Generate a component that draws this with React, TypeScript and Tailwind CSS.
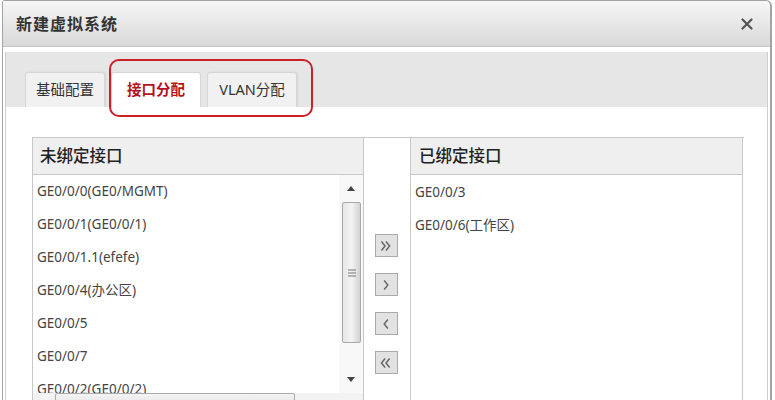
import React from "react";

const F = { fontFamily: '"Noto Sans", "Noto Sans CJK SC", sans-serif' };

function Chevs({ dir, n }: { dir: "r" | "l"; n: 1 | 2 }) {
  const one = (x: number) =>
    dir === "r" ? `M${x} 6 L${x + 4} 11 L${x} 16` : `M${x + 4} 6 L${x} 11 L${x + 4} 16`;
  return (
    <svg width="20" height="20" viewBox="0 0 20 22" className="block">
      {n === 1 ? (
        <path d={one(8)} fill="none" stroke="#666" strokeWidth="1.6" />
      ) : (
        <>
          <path d={one(5)} fill="none" stroke="#666" strokeWidth="1.6" />
          <path d={one(10)} fill="none" stroke="#666" strokeWidth="1.6" />
        </>
      )}
    </svg>
  );
}

function MoveBtn({ dir, n }: { dir: "r" | "l"; n: 1 | 2 }) {
  return (
    <div className="w-[23px] h-[23px] border border-[#a9a9a9] bg-[#e2e2e2] flex items-center justify-center">
      <Chevs dir={dir} n={n} />
    </div>
  );
}

const unbound = [
  "GE0/0/0(GE0/MGMT)",
  "GE0/0/1(GE0/0/1)",
  "GE0/0/1.1(efefe)",
  "GE0/0/4(办公区)",
  "GE0/0/5",
  "GE0/0/7",
  "GE0/0/2(GE0/0/2)",
];
const bound = ["GE0/0/3", "GE0/0/6(工作区)"];

export default function App() {
  return (
    <div className="w-[775px] h-[400px] overflow-hidden bg-white relative" style={F}>
      <div className="ml-[2px] w-[770px] h-[420px] border border-[#a3a3a3] border-r-2 rounded-tr-[6px] rounded-tl-[3px] bg-white flex flex-col">
        {/* title bar */}
        <div className="h-[46px] shrink-0 bg-gradient-to-b from-[#f6f6f6] to-[#d9d9d9] border-b border-[#c4c4c4] rounded-tr-[5px] flex items-center justify-between pl-[13px] pr-[17px]">
          <span className="text-[16px] font-bold text-[#333] tracking-[1px]">新建虚拟系统</span>
          <svg width="12" height="12" viewBox="0 0 12 12">
            <path d="M1.5 1.5 L10.5 10.5 M10.5 1.5 L1.5 10.5" stroke="#555" strokeWidth="2.2" strokeLinecap="round" />
          </svg>
        </div>
        {/* body */}
        <div className="flex-1 px-[2px] pt-[5px]">
          <div className="h-full border-l border-r border-[#cfcfcf] flex flex-col">
            {/* tab bar */}
            <div className="h-[55px] shrink-0 bg-[#e6e6e6] flex items-end pl-[19px] gap-[6px]">
              <div className="w-[80px] h-[35px] rounded-t-[3px] border border-b-0 border-[#d6d6d6] bg-[#f1f1f1] shadow-[1px_0_2px_rgba(0,0,0,0.08)] flex items-center justify-center text-[14.5px] text-[#333]">
                基础配置
              </div>
              <div className="w-[90px] h-[35px] rounded-t-[3px] border border-b-0 border-[#d6d6d6] bg-white flex items-center justify-center text-[14.5px] font-bold text-[#b5121b]">
                接口分配
              </div>
              <div className="w-[90px] h-[35px] rounded-t-[3px] border border-b-0 border-[#d6d6d6] bg-[#f1f1f1] shadow-[1px_0_2px_rgba(0,0,0,0.08)] flex items-center justify-center text-[14.5px] text-[#333]">
                VLAN分配
              </div>
            </div>
            {/* content */}
            <div className="flex-1 bg-white pt-[30px] pl-[26px]">
              <div className="flex border-t border-[#c8c8c8] w-[712px]">
                {/* left list */}
                <div className="w-[332px] border-l border-r border-[#c8c8c8] flex flex-col">
                  <div className="h-[37px] bg-[#efefef] border-b border-[#c8c8c8] flex items-center pl-[7px] text-[16.5px] font-medium text-[#222]">
                    未绑定接口
                  </div>
                  <div className="h-[218px] flex">
                    <div className="flex-1 overflow-hidden">
                      {unbound.map((t) => (
                        <div key={t} className="h-[33px] flex items-center pl-[4px] text-[13.5px] text-[#444] whitespace-nowrap">
                          {t}
                        </div>
                      ))}
                    </div>
                    {/* vertical scrollbar */}
                    <div className="w-[24px] bg-[#f8f8f8] flex flex-col items-center">
                      <div className="h-[27px] flex items-center justify-center">
                        <svg width="8" height="5" viewBox="0 0 8 5"><path d="M0 5 L4 0 L8 5 Z" fill="#444" /></svg>
                      </div>
                      <div className="w-[19px] h-[141px] ml-[1px] border border-[#a9a9a9] rounded-[2px] bg-gradient-to-r from-[#e6e6e6] via-[#f4f4f4] to-[#d2d2d2] flex items-center justify-center">
                        <svg width="8" height="8" viewBox="0 0 8 8">
                          <path d="M0 1 H8 M0 4 H8 M0 7 H8" stroke="#777" strokeWidth="1" />
                        </svg>
                      </div>
                      <div className="flex-1 flex items-end justify-center pb-[11px]">
                        <svg width="8" height="5" viewBox="0 0 8 5"><path d="M0 0 L4 5 L8 0 Z" fill="#444" /></svg>
                      </div>
                    </div>
                  </div>
                  {/* horizontal scrollbar */}
                  <div className="h-[20px] flex bg-[#f3f3f3]">
                    <div className="w-[22px]" />
                    <div className="w-[240px] border border-[#a9a9a9] rounded-[2px] bg-gradient-to-b from-[#f4f4f4] to-[#dcdcdc]" />
                  </div>
                </div>
                {/* middle */}
                <div className="w-[46px] flex flex-col items-center pt-[96px] gap-[16px] pr-[2px]">
                  <MoveBtn dir="r" n={2} />
                  <MoveBtn dir="r" n={1} />
                  <MoveBtn dir="l" n={1} />
                  <MoveBtn dir="l" n={2} />
                </div>
                {/* right list */}
                <div className="w-[333px] border-l border-r border-[#c8c8c8] flex flex-col">
                  <div className="h-[37px] bg-[#efefef] border-b border-[#c8c8c8] flex items-center pl-[8px] text-[16.5px] font-medium text-[#222]">
                    已绑定接口
                  </div>
                  <div className="h-[240px] pt-[1px]">
                    {bound.map((t) => (
                      <div key={t} className="h-[33px] flex items-center pl-[4px] text-[13.5px] text-[#444] whitespace-nowrap">
                        {t}
                      </div>
                    ))}
                  </div>
                </div>
              </div>
            </div>
          </div>
        </div>
      </div>
      {/* red annotation box */}
      <div className="absolute left-[109px] top-[59px] w-[204px] h-[58px] border-2 border-[#cc1f2a] rounded-[10px] pointer-events-none" />
    </div>
  );
}
